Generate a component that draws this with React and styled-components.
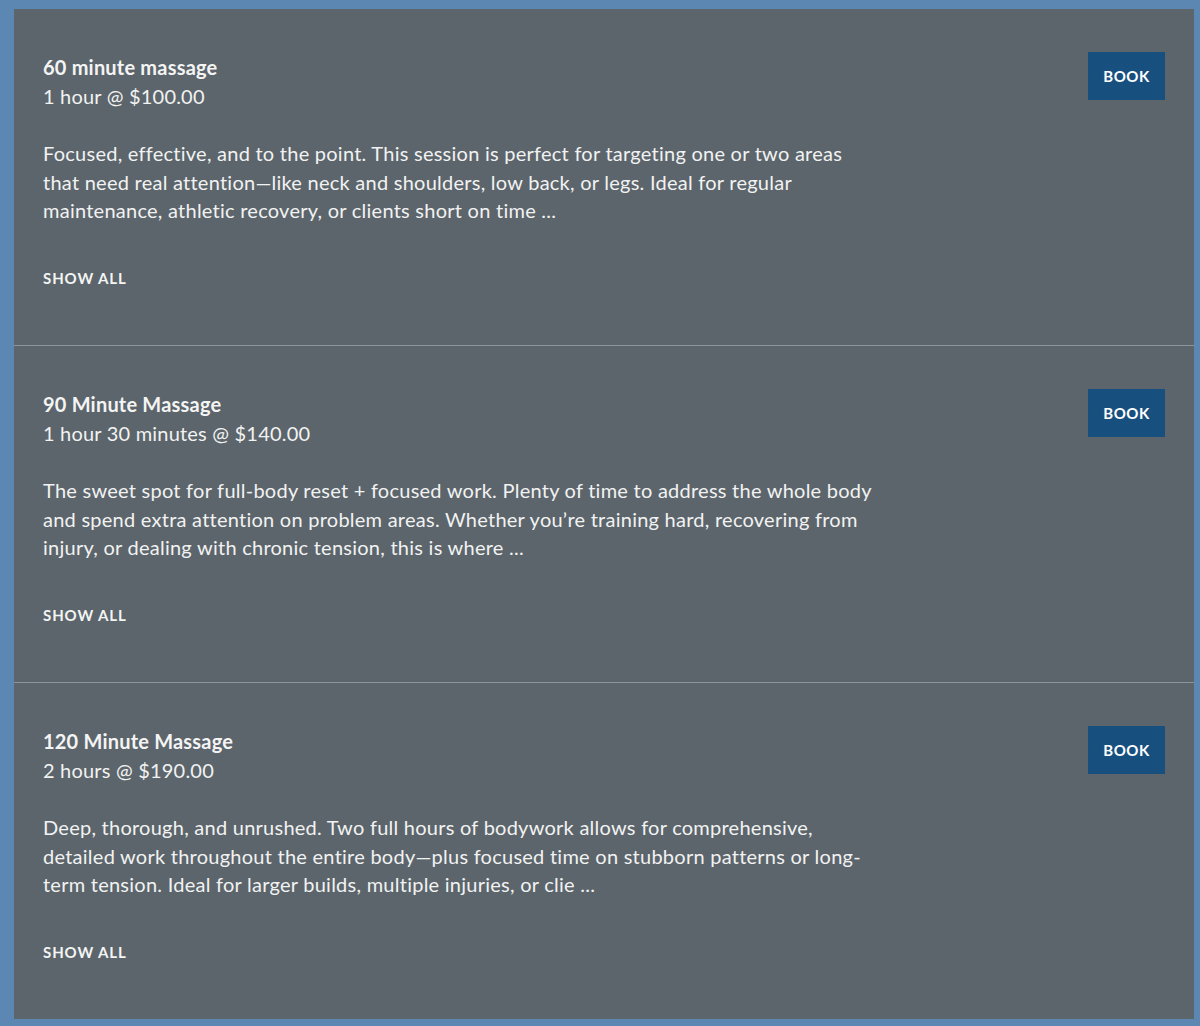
import React from "react";
import styled, { createGlobalStyle } from "styled-components";

const Global = createGlobalStyle`
  html, body {
    margin: 0;
    padding: 0;
    background: #5d87b3;
  }
  body {
    font-family: Lato, "Open Sans", sans-serif;
  }
`;

const Frame = styled.div`
  padding: 9px 6px 7px 14px;
  height: 1026px;
  box-sizing: border-box;
`;

const Panel = styled.div`
  background: #5b656b;
  height: 100%;
  display: flex;
  flex-direction: column;
`;

const Service = styled.section`
  display: flex;
  justify-content: space-between;
  align-items: flex-start;
  padding: 43px 29px 0 29px;
  height: ${(p) => (p.first ? "336px" : "337px")};
  box-sizing: border-box;
  border-top: ${(p) => (p.first ? "none" : "1px solid #8c959a")};
  color: #f2f2f2;
`;

const Info = styled.div`
  display: flex;
  flex-direction: column;
  padding-top: 1px;
`;

const Title = styled.h2`
  margin: 0;
  font-size: 20px;
  font-weight: 700;
  line-height: 29px;
  letter-spacing: 0.2px;
  color: #f4f4f4;
`;

const Meta = styled.div`
  font-size: 20px;
  line-height: 29px;
  letter-spacing: 0.2px;
`;

const Description = styled.p`
  margin: 28px 0 0;
  max-width: 838px;
  font-size: 20px;
  line-height: 28.7px;
  letter-spacing: 0.25px;
`;

const ShowAll = styled.button`
  align-self: flex-start;
  margin-top: 43px;
  padding: 0;
  background: none;
  border: none;
  color: #f4f4f4;
  font-family: inherit;
  font-size: 15px;
  font-weight: 700;
  line-height: 20px;
  letter-spacing: 0.9px;
  text-transform: uppercase;
  cursor: pointer;
`;

const BookBtn = styled.button`
  flex-shrink: 0;
  width: 77px;
  height: 48px;
  background: #17507f;
  border: none;
  color: #ffffff;
  font-family: inherit;
  font-size: 15px;
  font-weight: 700;
  letter-spacing: 0.5px;
  cursor: pointer;
`;

const services = [
  {
    title: "60 minute massage",
    meta: "1 hour @ $100.00",
    text: "Focused, effective, and to the point. This session is perfect for targeting one or two areas that need real attention\u2014like neck and shoulders, low back, or legs. Ideal for regular maintenance, athletic recovery, or clients short on time ...",
  },
  {
    title: "90 Minute Massage",
    meta: "1 hour 30 minutes @ $140.00",
    text: "The sweet spot for full-body reset + focused work. Plenty of time to address the whole body and spend extra attention on problem areas. Whether you\u2019re training hard, recovering from injury, or dealing with chronic tension, this is where ...",
  },
  {
    title: "120 Minute Massage",
    meta: "2 hours @ $190.00",
    text: "Deep, thorough, and unrushed. Two full hours of bodywork allows for comprehensive, detailed work throughout the entire body\u2014plus focused time on stubborn patterns or long-term tension. Ideal for larger builds, multiple injuries, or clie ...",
  },
];

export default function App() {
  return (
    <>
      <Global />
      <Frame>
        <Panel>
          {services.map((s, i) => (
            <Service key={s.title} first={i === 0}>
              <Info>
                <Title>{s.title}</Title>
                <Meta>{s.meta}</Meta>
                <Description>{s.text}</Description>
                <ShowAll>Show all</ShowAll>
              </Info>
              <BookBtn>BOOK</BookBtn>
            </Service>
          ))}
        </Panel>
      </Frame>
    </>
  );
}
